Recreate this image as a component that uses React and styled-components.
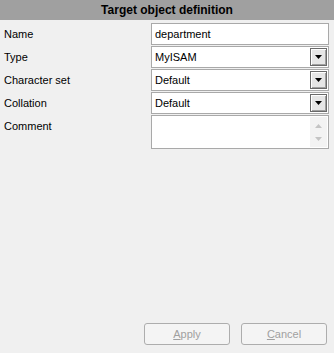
import React from "react";
import styled, { createGlobalStyle } from "styled-components";

const GlobalStyle = createGlobalStyle`
  html, body {
    margin: 0;
    padding: 0;
    background: #f0f0f0;
  }
  body {
    font-family: "Liberation Sans", Arial, sans-serif;
    font-size: 11px;
    color: #000;
  }
`;

const fields = [
  { label: "Name", kind: "text", value: "department" },
  { label: "Type", kind: "select", value: "MyISAM" },
  { label: "Character set", kind: "select", value: "Default" },
  { label: "Collation", kind: "select", value: "Default" },
  { label: "Comment", kind: "memo", value: "" },
];

function Field({ field }) {
  if (field.kind === "text") {
    return (
      <Box>
        <Value>{field.value}</Value>
      </Box>
    );
  }
  if (field.kind === "select") {
    return (
      <Box>
        <Value>{field.value}</Value>
        <DropButton>
          <svg width="7" height="4" viewBox="0 0 7 4">
            <path d="M0 0h7L3.5 4z" fill="#000" />
          </svg>
        </DropButton>
      </Box>
    );
  }
  return (
    <Box $tall>
      <Value />
      <ScrollTrack>
        <svg width="7" height="4" viewBox="0 0 7 4">
          <path d="M0 4h7L3.5 0z" fill="#c4c4c4" />
        </svg>
        <svg width="7" height="4" viewBox="0 0 7 4">
          <path d="M0 0h7L3.5 4z" fill="#c4c4c4" />
        </svg>
      </ScrollTrack>
    </Box>
  );
}

export default function App() {
  return (
    <>
      <GlobalStyle />
      <Panel>
        <Header>Target object definition</Header>
        <Form>
          {fields.map((f) => (
            <React.Fragment key={f.label}>
              <Label>{f.label}</Label>
              <Field field={f} />
            </React.Fragment>
          ))}
        </Form>
        <Footer>
          <Button disabled>
            <u>A</u>pply
          </Button>
          <Button disabled>
            <u>C</u>ancel
          </Button>
        </Footer>
      </Panel>
    </>
  );
}

const Panel = styled.div`
  display: flex;
  flex-direction: column;
  width: 334px;
  height: 353px;
  background: #f0f0f0;
`;

const Header = styled.div`
  height: 20px;
  line-height: 20px;
  background: #a0a0a0;
  text-align: center;
  font-weight: bold;
  font-size: 12px;
`;

const Form = styled.div`
  display: grid;
  grid-template-columns: 147px 178px;
  grid-auto-rows: 22px;
  row-gap: 1px;
  padding: 3px 0 0 4px;
  & > :last-child {
    grid-row: span 2;
  }
`;

const Label = styled.div`
  line-height: 22px;
  align-self: start;
`;

const Box = styled.div`
  display: flex;
  align-items: stretch;
  box-sizing: border-box;
  height: ${(p) => (p.$tall ? "34px" : "22px")};
  border: 1px solid #a9a9a9;
  background: #fff;
  padding: 1px;
`;

const Value = styled.div`
  flex: 1;
  padding: 2px 0 0 2px;
  line-height: 15px;
`;

const DropButton = styled.div`
  width: 17px;
  box-sizing: border-box;
  display: flex;
  align-items: center;
  justify-content: center;
  background: #e6e6e6;
  border: 1px solid #6a6a6a;
  box-shadow: inset 1px 1px 0 #fff, inset -1px -1px 0 #a0a0a0;
`;

const ScrollTrack = styled.div`
  width: 17px;
  display: flex;
  flex-direction: column;
  justify-content: space-around;
  align-items: center;
  background: #f3f3f3;
  padding: 2px 0;
`;

const Footer = styled.div`
  margin-top: auto;
  display: flex;
  justify-content: flex-end;
  gap: 11px;
  padding: 0 7px 8px 0;
`;

const Button = styled.button`
  width: 86px;
  height: 22px;
  box-sizing: border-box;
  border: 1px solid #adadad;
  border-radius: 3px;
  background: #f4f4f4;
  color: #a0a0a0;
  font-family: "Liberation Sans", Arial, sans-serif;
  font-size: 11px;
  padding: 0;
  u {
    text-decoration: underline;
  }
`;
